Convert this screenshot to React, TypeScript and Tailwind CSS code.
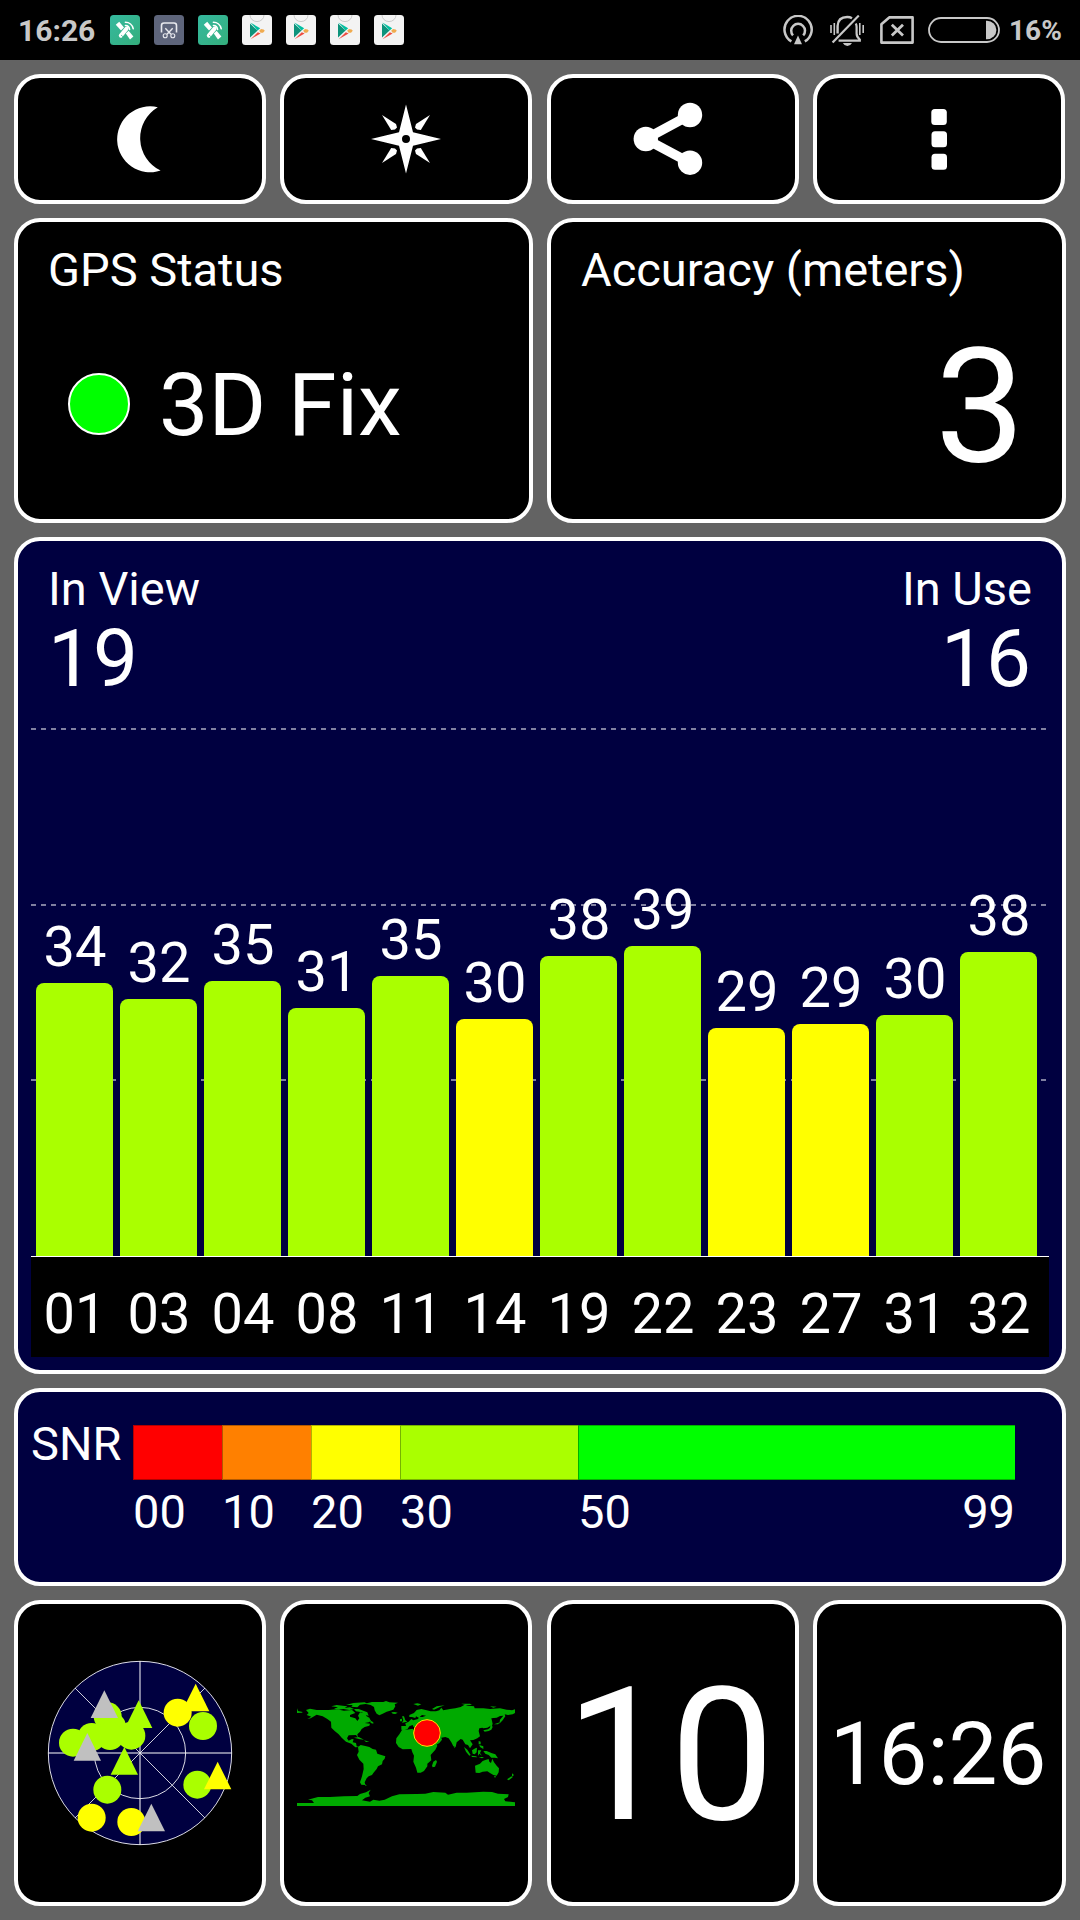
import type { ReactNode } from 'react';
import clsx from 'clsx';

interface Satellite {
  id: string;
  snr: number;
  height: number;
  weak?: boolean;
}

const satellites: Satellite[] = [
  { id: '01', snr: 34, height: 273 },
  { id: '03', snr: 32, height: 257 },
  { id: '04', snr: 35, height: 275 },
  { id: '08', snr: 31, height: 248 },
  { id: '11', snr: 35, height: 280 },
  { id: '14', snr: 30, height: 237, weak: true },
  { id: '19', snr: 38, height: 300 },
  { id: '22', snr: 39, height: 310 },
  { id: '23', snr: 29, height: 228, weak: true },
  { id: '27', snr: 29, height: 232, weak: true },
  { id: '31', snr: 30, height: 241 },
  { id: '32', snr: 38, height: 304 },
];

const snrScale = [
  { from: '00', color: 'bg-[#ff0000]', width: 'w-[89px]' },
  { from: '10', color: 'bg-[#ff8000]', width: 'w-[89px]' },
  { from: '20', color: 'bg-[#ffff00]', width: 'w-[89px]' },
  { from: '30', color: 'bg-[#aaff00]', width: 'w-[178px]' },
  { from: '50', to: '99', color: 'bg-[#00ff00]', width: 'w-[437px]' },
];

const LIME = '#aaff00';
const YELLOW = '#ffff00';
const GREY = '#c0c0c0';

// Sky plot markers, in drawing order
const markers = [
  { shape: 'circle', x: 219, y: 458, color: LIME },
  { shape: 'circle', x: 275, y: 441, color: LIME },
  { shape: 'circle', x: 323, y: 379, color: LIME },
  { shape: 'circle', x: 336, y: 410, color: LIME },
  { shape: 'circle', x: 330, y: 438, color: LIME },
  { shape: 'circle', x: 394, y: 437, color: LIME },
  { shape: 'circle', x: 609, y: 408, color: LIME },
  { shape: 'circle', x: 322, y: 599, color: LIME },
  { shape: 'circle', x: 592, y: 584, color: LIME },
  { shape: 'circle', x: 275, y: 683, color: YELLOW },
  { shape: 'circle', x: 394, y: 696, color: YELLOW },
  { shape: 'triangle', x: 587, y: 281, color: YELLOW },
  { shape: 'circle', x: 533, y: 368, color: YELLOW },
  { shape: 'triangle', x: 416, y: 331, color: LIME },
  { shape: 'triangle', x: 373, y: 471, color: LIME },
  { shape: 'triangle', x: 653, y: 515, color: YELLOW },
  { shape: 'triangle', x: 313, y: 301, color: GREY },
  { shape: 'triangle', x: 262, y: 429, color: GREY },
  { shape: 'triangle', x: 454, y: 641, color: GREY },
];

function Card({ className, children }: { className?: string; children: ReactNode }) {
  return (
    <div className={clsx('rounded-[26px] border-4 border-white text-white', className)}>
      {children}
    </div>
  );
}

function SatelliteAppIcon() {
  return (
    <svg width="30" height="30" viewBox="0 0 30 30">
      <defs>
        <linearGradient id="sat" x1="0" y1="0" x2="1" y2="1">
          <stop offset="0" stopColor="#35b99f" />
          <stop offset="1" stopColor="#34ae7c" />
        </linearGradient>
      </defs>
      <rect width="30" height="30" rx="3.5" fill="url(#sat)" />
      <g fill="#fff">
        <path d="M5.8 9.8L9.2 6.8L14 12.6L11 15.4Z" />
        <path d="M15.8 18.6L18.6 15.8L23.4 21.4L20 24.6Z" />
      </g>
      <g fill="none" stroke="#fff" strokeLinecap="round">
        <path d="M10.8 20.6L16.6 13.6" strokeWidth="4" />
        <path d="M15.4 10.6A4.4 4.4 0 0 1 19.6 14.6" strokeWidth="1.5" />
        <path d="M15.4 7.2A8 8 0 0 1 23.2 13.6" strokeWidth="1.6" />
      </g>
      <path d="M11.2 20.2L12.8 21.6" stroke="#34b38d" strokeWidth=".9" />
    </svg>
  );
}

function ScreenshotIcon() {
  return (
    <svg width="30" height="30" viewBox="0 0 30 30" fill="none" stroke="#e8e9ee">
      <rect width="30" height="30" rx="3.5" fill="#5e657b" stroke="none" />
      <path d="M7.5 17.5V10.5Q7.5 8 10 8H20Q22.5 8 22.5 10.5V17.5" strokeWidth="1.6" />
      <path d="M11.3 13.2L17 19.2M18.7 13.2L13 19.2" strokeWidth="1.4" />
      <circle cx="11.2" cy="20.7" r="2" strokeWidth="1.1" />
      <circle cx="18.8" cy="20.7" r="2" strokeWidth="1.1" />
    </svg>
  );
}

function PlayStoreIcon() {
  return (
    <svg width="30" height="30" viewBox="0 0 30 30">
      <rect width="30" height="30" rx="3.5" fill="#f3f3f3" />
      <path d="M8 0A7 6.6 0 0 0 22 0" fill="none" stroke="#cbcbcb" />
      <path d="M8 8.6L15.6 15.6L8 22.6Z" fill="#0d937b" />
      <path d="M8.4 7.6L18.2 13.2L15.6 15.6Z" fill="#00bfa0" />
      <path d="M8.6 24.2L15.8 17.2L18.6 18.4Z" fill="#ee4c40" />
      <path d="M17.2 15.8L19 14L21.6 14.4L22.8 15.8L21 17.8L18.6 17.8Z" fill="#f0ab4f" />
    </svg>
  );
}

function HotspotIcon() {
  return (
    <svg width="30" height="30" viewBox="0 0 30 30" fill="none" stroke="#c8c8c8" strokeWidth="2.5">
      <path d="M8.4 26.3A13.6 13.6 0 1 1 21.8 26.3" />
      <path d="M10 20.4A6.9 6.9 0 1 1 20.2 20.4" />
      <path d="M15 20.6L19 29.2H11Z" fill="#c8c8c8" stroke="none" />
    </svg>
  );
}

function MutedBellIcon() {
  return (
    <svg width="34" height="31" viewBox="0 0 34 31" fill="none" stroke="#c8c8c8">
      <path d="M1 10V18M4.3 8V20M29.8 8V20M33.2 10V18" strokeWidth="1.6" />
      <path d="M7.6 18.5V11Q8 2 17.2 2Q20 2 22 3.2" strokeWidth="2.4" />
      <path d="M25.8 8.5Q26.6 10 26.6 12V18.5Q26.6 22 29.8 24.5V25.6H8.6" strokeWidth="2.2" />
      <path d="M2.6 27.4L28.8 .6" strokeWidth="2.2" />
      <path d="M12.8 28H22Q20.4 31 17.4 31Q14.4 31 12.8 28Z" fill="#c8c8c8" stroke="none" />
    </svg>
  );
}

function NoSimIcon() {
  return (
    <svg width="34" height="28" viewBox="0 0 34 28" fill="none" stroke="#c8c8c8">
      <path d="M9.2 1.4H32.6V26.6H1.4V8.2Z" strokeWidth="2.6" strokeLinejoin="round" />
      <path d="M11.8 8.8L23 19.4M23 8.8L11.8 19.4" strokeWidth="2.8" />
    </svg>
  );
}

function BatteryIcon() {
  return (
    <svg width="72" height="26" viewBox="0 0 72 26">
      <rect x="1" y="1" width="70" height="24" rx="12" fill="none" stroke="#c8c8c8" strokeWidth="1.8" />
      <path d="M58 3.8H59A9.4 9.2 0 0 1 59 22.2H58Z" fill="#c8c8c8" />
    </svg>
  );
}

function StatusBar() {
  return (
    <div className="flex h-15 items-center justify-between bg-black pr-[18px] pl-[18px] text-[#c8c8c8]">
      <div className="flex items-center gap-3.5">
        <span className="w-[78px] pt-px text-[30px] leading-none font-bold">16:26</span>
        <SatelliteAppIcon />
        <ScreenshotIcon />
        <SatelliteAppIcon />
        <PlayStoreIcon />
        <PlayStoreIcon />
        <PlayStoreIcon />
        <PlayStoreIcon />
      </div>
      <div className="flex items-center">
        <HotspotIcon />
        <span className="w-[17px]" />
        <MutedBellIcon />
        <span className="w-4" />
        <NoSimIcon />
        <span className="w-3.5" />
        <BatteryIcon />
        <span className="ml-[9px] w-[53px] pt-px text-[28px] leading-none font-bold">16%</span>
      </div>
    </div>
  );
}

function MoonIcon() {
  return (
    <svg width="90" height="80" viewBox="95 99 90 80" fill="#fff">
      <path d="M157.8 107.2A33 33 0 1 0 160.6 170.6A36 36 0 0 1 157.8 107.2Z" />
    </svg>
  );
}

function CompassIcon() {
  const ray = 'M-24-24L-10-15L-9-11.5L-11-9.4L-14.8-9Z';
  return (
    <svg width="90" height="80" viewBox="-45 -40 90 80" fill="#fff">
      <path
        fillRule="evenodd"
        d="M0-34.5L7-6.8L35 0L7 6.8L0 34.5L-7 6.8L-35 0L-7-6.8ZM4 0A4 4 0 1 0-4 0A4 4 0 1 0 4 0Z"
      />
      <path d={ray} />
      <path d={ray} transform="scale(-1 1)" />
      <path d={ray} transform="scale(1 -1)" />
      <path d={ray} transform="scale(-1 -1)" />
    </svg>
  );
}

function ShareIcon() {
  return (
    <svg width="90" height="80" viewBox="628 99 90 80" fill="#fff">
      <path d="M690 115L645.5 139L690 162.7" fill="none" stroke="#fff" strokeWidth="9.5" />
      <circle cx="690" cy="115" r="12.2" />
      <circle cx="645.8" cy="139" r="12.2" />
      <circle cx="690" cy="162.7" r="12.2" />
    </svg>
  );
}

function MoreIcon() {
  return (
    <svg width="90" height="80" viewBox="894 99 90 80" fill="#fff">
      <rect x="931.3" y="109" width="15.5" height="16" rx="3.5" />
      <rect x="931.5" y="131.3" width="15.5" height="16" rx="3.5" />
      <rect x="931.5" y="153.7" width="15.5" height="16" rx="3.5" />
    </svg>
  );
}

function SkyPlot() {
  return (
    <svg width="190" height="190" viewBox="135 204 570 570">
      <circle cx="420" cy="489" r="275" fill="#000040" stroke="#dcdce6" strokeWidth="3" />
      <circle cx="420" cy="489" r="137" fill="none" stroke="#dcdce6" strokeWidth="3" />
      <path d="M145 489H695M420 214V764" stroke="#fff" strokeOpacity=".5" strokeWidth="6" />
      <path
        d="M226 295L614 683M614 295L226 683"
        stroke="#fff"
        strokeWidth="2.4"
        shapeRendering="crispEdges"
      />
      {markers.map(({ shape, x, y, color }) =>
        shape === 'circle' ? (
          <circle key={`${x}-${y}`} cx={x} cy={y} r="42" fill={color} />
        ) : (
          <path key={`${x}-${y}`} d={`M${x} ${y}l41 83h-82z`} fill={color} />
        ),
      )}
    </svg>
  );
}

function WorldMap() {
  return (
    <svg width="218" height="105" viewBox="81 126 654 315" fill="#00aa00" className="overflow-visible">
      {/* North America */}
      <path d="M108 153L120 149L140 153L176 153L200 151L222 155L246 153L256 162L240 168L240 173L256 178L262 186L268 178L264 170L270 160L284 162L290 172L298 176L303 186L296 190L284 192L300 194L298 200L284 204L275 210L270 218L262 226L264 236L258 228L236 229L231 238L236 245L246 240L251 241L248 250L258 252L260 262L268 264L256 265L244 254L228 248L215 236L206 226L194 216L184 206L183 188L172 180L158 172L140 167L122 178L112 180L124 173L110 168L116 162Z" />
      <path d="M81 148L84 156L98 159L96 161L81 162Z" />
      <path d="M184 142L200 138L218 140L232 142L224 147L240 145L252 150L238 153L220 150L206 152L192 149L204 145Z" />
      <path d="M228 138L250 132L284 130L292 134L270 137L262 145L244 143L248 138Z" />
      <path d="M252 150L266 150L280 155L292 160L296 170L286 168L276 160L258 157Z" />
      <path d="M300 184L310 190L310 194L302 192Z" />
      <path d="M252 236L266 234L282 242L270 241ZM282 244L298 248L288 249Z" />
      {/* Greenland and Iceland */}
      <path d="M284 134L306 129L340 129L348 126L358 130L384 131L374 136L376 142L370 152L350 158L338 164L328 169L320 164L314 154L312 144L302 138Z" />
      <path d="M364 160L374 159L383 161L376 165L368 164Z" />
      {/* South America */}
      <path d="M264 264L272 258L286 261L298 264L308 270L318 272L322 284L334 288L346 292L344 299L338 306L336 316L324 322L320 330L310 342L306 348L296 352L290 358L284 370L286 378L274 377L270 370L276 352L281 330L280 314L268 302L261 288L266 278Z" />
      <path d="M284 376L290 379L287 381Z" />
      {/* Africa and Madagascar */}
      <path d="M396 213L410 212L428 209L434 216L500 216L490 240L502 260L496 272L482 288L484 304L472 314L472 322L462 336L452 341L442 341L438 326L430 308L432 290L427 280L424 270L398 271L386 264L378 252L379 238L388 226Z" />
      <path d="M498 303L501 308L495 323L488 325L486 320L490 308Z" />
      {/* Europe and Asia */}
      <path d="M394 212L394 201L408 201L406 193L416 188L424 180L430 184L444 180L448 174L458 174L468 170L456 168L446 176L438 172L436 177L426 174L418 174L418 168L432 162L440 153L454 150L470 154L482 157L498 157L508 154L514 146L520 154L540 150L556 148L572 144L584 137L594 140L612 142L614 148L640 148L660 150L690 148L710 152L726 154L735 151L735 162L728 166L714 168L704 166L706 172L698 184L688 194L690 182L700 170L690 171L680 176L664 178L667 190L662 200L652 206L640 208L637 206L628 208L626 216L630 232L622 238L610 243L600 244L608 256L600 268L594 258L586 256L578 242L572 240L560 250L557 264L550 262L544 250L536 238L526 234L514 236L516 242L508 252L498 258L480 222L430 203L428 198L418 202L412 211L402 214Z" />
      <path d="M396 172L402 172L406 184L412 188L396 191L400 184ZM390 181L396 179L396 187L390 187Z" />
      {/* Arctic islands */}
      <path d="M430 135L442 133L454 136L444 140ZM486 150L500 142L524 139L508 145L492 152ZM574 134L600 134L606 138L586 138ZM660 142L680 143L670 146Z" />
      {/* Japan, Sakhalin */}
      <path d="M664 184L668 194L666 200L668 204L664 212L656 216L644 218L640 214L654 211L660 206Z" />
      <path d="M672 196L690 190L684 196Z" />
      {/* South-east Asia */}
      <path d="M582 264L592 272L602 288L598 290L588 278ZM604 290L618 292L622 295L606 294ZM606 274L616 268L621 266L620 280L614 286L608 284ZM624 274L634 274L630 282L636 290L628 284L624 290ZM626 246L632 248L632 256L626 256ZM628 258L640 262L640 270L630 264ZM626 294L642 294L636 298Z" />
      <path d="M640 276L650 276L664 282L676 286L684 298L674 296L664 296L656 288L646 284Z" />
      <path d="M552 262L556 264L554 268Z" />
      {/* Australia and New Zealand */}
      <path d="M615 320L630 314L638 306L646 303L656 300L658 308L663 312L667 299L672 310L680 320L687 328L686 340L680 350L670 348L660 342L652 337L638 338L628 342L617 341Z" />
      <path d="M672 351L678 352L675 357Z" />
      <path d="M726 343L732 348L726 353ZM724 352L728 355L716 364L711 361Z" />
      {/* Antarctica */}
      <path d="M81 432H132L126 424L114 422L130 418L144 414L180 414L222 412L262 411L270 405L288 400L302 392L296 402L300 412L286 416L276 424L300 428L310 422L328 425L344 422L366 412L388 406L440 405L466 404L490 399L526 401L534 407L560 401L590 401L640 398L666 399L684 404L716 406L714 414L702 420L706 427L735 430V441H81Z" />
      <circle cx="471" cy="222" r="40" fill="#ff0000" stroke="#ffe600" strokeWidth="3" />
    </svg>
  );
}

function SatelliteChart() {
  return (
    <Card className="h-[837px] bg-[#000040] px-[13px] pt-6">
      <div className="flex justify-between px-[17px]">
        <div>
          <p className="text-[47px] leading-none">In View</p>
          <p className="mt-[7px] text-[80px] leading-none">19</p>
        </div>
        <div className="text-right">
          <p className="text-[47px] leading-none">In Use</p>
          <p className="mt-[7px] pr-px text-[80px] leading-none">16</p>
        </div>
      </div>
      <div className="relative mt-[29px] h-[528px]">
        <svg className="absolute inset-0" width="1018" height="528">
          <path
            d="M0 1H1015M0 177H1015M0 352H1015"
            stroke="#fff"
            strokeOpacity=".5"
            strokeWidth="2"
            strokeDasharray="5 5"
          />
        </svg>
        <div className="relative flex h-full items-end gap-[7px] pl-[5px]">
          {satellites.map((sat) => (
            <div key={sat.id} className="w-[77px] text-center">
              <p className="mb-2 pl-px text-[56px] leading-none">{sat.snr}</p>
              <div
                className={clsx('rounded-t-lg', sat.weak ? 'bg-[#ffff00]' : 'bg-[#aaff00]')}
                style={{ height: sat.height }}
              />
            </div>
          ))}
        </div>
      </div>
      <div className="flex h-[101px] w-[1018px] gap-[7px] border-t border-white bg-black pt-[29px] pl-[5px]">
        {satellites.map((sat) => (
          <span key={sat.id} className="w-[77px] pl-px text-center text-[56px] leading-none">
            {sat.id}
          </span>
        ))}
      </div>
    </Card>
  );
}

export default function App() {
  return (
    <div className="h-[1920px] w-[1080px] overflow-hidden bg-[#636363] font-[Roboto,sans-serif]">
      <StatusBar />
      <main className="flex flex-col gap-3.5 p-3.5">
        <div className="flex gap-3.5">
          <div className="flex w-[519px] gap-3.5">
            <Card className="flex h-[130px] w-[252px] items-center justify-center bg-black">
              <MoonIcon />
            </Card>
            <Card className="flex h-[130px] w-[252px] items-center justify-center bg-black">
              <CompassIcon />
            </Card>
          </div>
          <div className="flex w-[519px] gap-3.5">
            <Card className="flex h-[130px] w-[252px] items-center justify-center bg-black">
              <ShareIcon />
            </Card>
            <Card className="flex h-[130px] w-[252px] items-center justify-center bg-black">
              <MoreIcon />
            </Card>
          </div>
        </div>

        <div className="flex gap-3.5">
          <Card className="h-[305px] w-[519px] bg-black pt-6">
            <p className="pl-[30px] text-[47px] leading-none">GPS Status</p>
            <div className="mt-[68px] flex items-center gap-[29px] pl-[50px]">
              <span className="mb-[3px] h-[62px] w-[62px] rounded-full border-2 border-white bg-[#00ff00]" />
              <span className="text-[88px] leading-none">3D Fix</span>
            </div>
          </Card>
          <Card className="h-[305px] w-[519px] bg-black pt-6">
            <p className="pl-[30px] text-[47px] leading-none">Accuracy (meters)</p>
            <p className="mt-[34px] pr-[37px] text-right text-[160px] leading-none">3</p>
          </Card>
        </div>

        <SatelliteChart />

        <Card className="flex h-[198px] items-start bg-[#000040] pt-7 pl-[13px] text-[47px] leading-none">
          <span className="w-[102px]">SNR</span>
          <div className="mt-[5px] flex">
            {snrScale.map((step) => (
              <div key={step.from} className={step.width}>
                <div className={clsx('h-[55px] border-y border-l border-black/30', step.color)} />
                <div className="mt-2 flex justify-between">
                  <span>{step.from}</span>
                  {step.to && <span>{step.to}</span>}
                </div>
              </div>
            ))}
          </div>
        </Card>

        <div className="flex gap-3.5">
          <div className="flex w-[519px] gap-3.5">
            <Card className="flex h-[306px] w-[252px] items-center justify-center bg-black">
              <SkyPlot />
            </Card>
            <Card className="flex h-[306px] w-[252px] items-center justify-center bg-black pt-px">
              <WorldMap />
            </Card>
          </div>
          <div className="flex w-[519px] gap-3.5">
            <Card className="flex h-[306px] w-[252px] items-center justify-center bg-black pt-1 pr-1.5">
              <span className="text-[186px] leading-none">10</span>
            </Card>
            <Card className="flex h-[306px] w-[253px] items-center justify-center bg-black pt-0.5 pr-[3px]">
              <span className="text-[87px] leading-none">16:26</span>
            </Card>
          </div>
        </div>
      </main>
    </div>
  );
}
